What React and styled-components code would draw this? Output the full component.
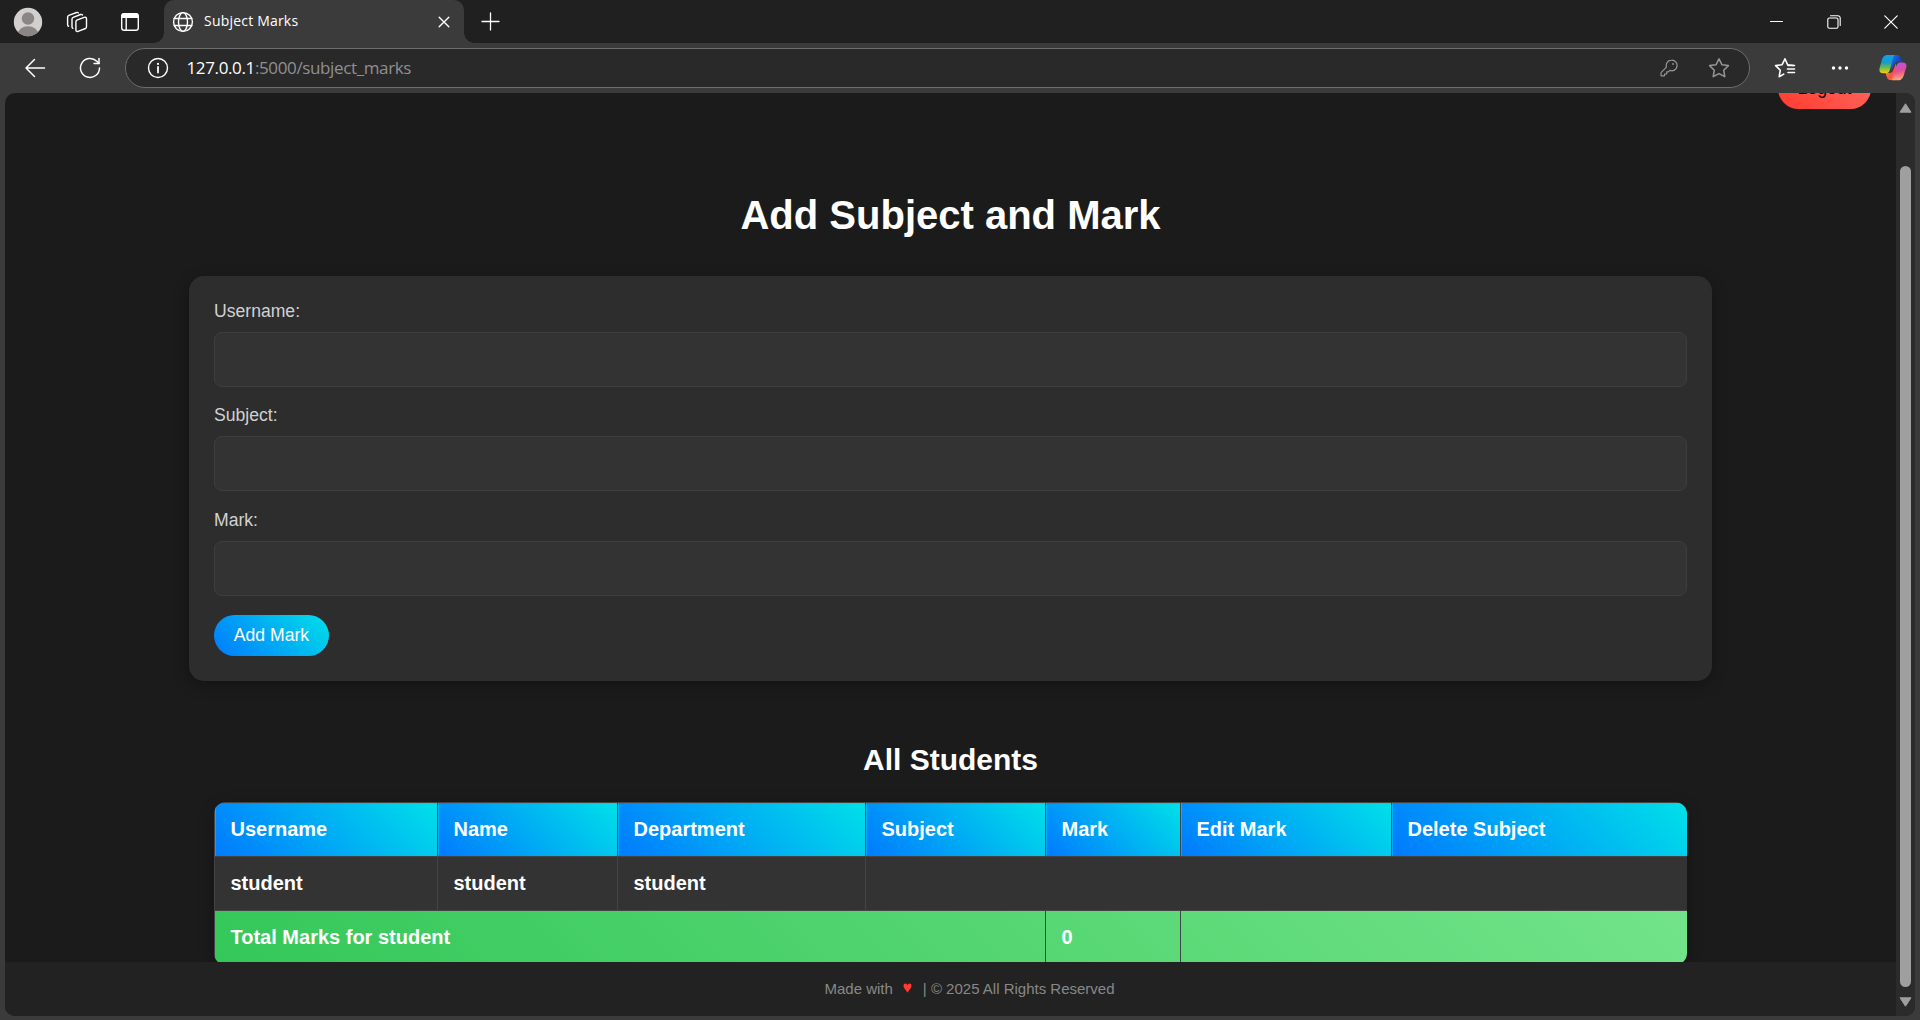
import React from 'react';
import styled, { createGlobalStyle } from 'styled-components';

const GlobalStyle = createGlobalStyle`
  * { box-sizing: border-box; }
  body { margin: 0; background: #3b3b3b; font-family: "Liberation Sans", Arial, sans-serif; overflow: hidden; }
`;

const Browser = styled.div`
  width: 1920px;
  height: 1020px;
  display: flex;
  flex-direction: column;
  background: #3b3b3b;
`;

const uiFont = `"Segoe UI", "Open Sans", "Noto Sans", sans-serif`;

const TabStrip = styled.header`
  display: flex;
  align-items: center;
  height: 43px;
  background: #202020;
  padding-left: 13px;
  font-family: ${uiFont};
  color: #fff;
  svg { display: block; flex: none; }
`;

const Slot = styled.div`
  margin-left: ${(p) => p.$gap || 0}px;
  flex: none;
`;

const Tab = styled.div`
  display: flex;
  align-items: center;
  position: relative;
  width: 300px;
  height: 43px;
  margin-left: 24px;
  padding: 0 14px 0 8px;
  border-radius: 10px 10px 0 0;
  background: #3b3b3b;
  &::before, &::after {
    content: "";
    position: absolute;
    bottom: 0;
    width: 10px;
    height: 10px;
  }
  &::before { left: -10px; background: radial-gradient(circle at 0 0, #202020 9.5px, #3b3b3b 10px); }
  &::after { right: -10px; background: radial-gradient(circle at 100% 0, #202020 9.5px, #3b3b3b 10px); }
`;

const TabTitle = styled.span`
  flex: 1;
  margin-left: 10px;
  padding-bottom: 2px;
  font-size: 14px;
  letter-spacing: 0.2px;
  line-height: 20px;
`;

const WindowControls = styled.div`
  display: flex;
  align-items: center;
  margin-left: auto;
  padding-right: 22px;
  gap: 43.5px;
`;

const Toolbar = styled.nav`
  display: flex;
  align-items: center;
  height: 50px;
  padding-left: 24px;
  color: #fff;
  svg { display: block; flex: none; }
`;

const AddressBar = styled.div`
  display: flex;
  align-items: center;
  width: 1625px;
  height: 40px;
  margin-left: 24px;
  padding: 0 19px 0 21px;
  border: 1px solid #6c6c6c;
  border-radius: 20px;
  background: #292929;
`;

const Url = styled.span`
  flex: 1;
  margin-left: 17.5px;
  font-family: ${uiFont};
  font-size: 17px;
  letter-spacing: -0.37px;
  line-height: 24px;
  color: #909090;
  b { font-weight: 400; color: #fff; }
`;

const Viewport = styled.div`
  display: flex;
  width: 1910px;
  height: 923px;
  margin-left: 5px;
  border-radius: 10px;
  overflow: hidden;
  background: #1b1b1b;
`;

const Page = styled.div`
  flex: 1;
  display: flex;
  flex-direction: column;
`;

const Content = styled.main`
  height: 869px;
  overflow: hidden;
  display: flex;
  flex-direction: column;
  align-items: center;
`;

const TopBar = styled.div`
  align-self: stretch;
  display: flex;
  justify-content: flex-end;
  align-items: flex-end;
  height: 16px;
  padding-right: 25px;
`;

const Pill = styled.button`
  flex: none;
  width: ${(p) => p.$width}px;
  height: 41px;
  padding: 0;
  border: 0;
  border-radius: 25px;
  font: 17.6px "Liberation Sans", Arial, sans-serif;
  color: ${(p) => (p.$danger ? '#000' : '#fff')};
  background: ${(p) => (p.$danger
    ? 'linear-gradient(45deg, #ff3b30, #ff6961)'
    : 'linear-gradient(45deg, #007aff, #00e0e8)')};
`;

const Title = styled.h1`
  margin: 83px 0 0;
  font-size: 40px;
  line-height: 46px;
  color: #fff;
`;

const FormCard = styled.form`
  width: 1523px;
  height: 405px;
  margin-top: 38px;
  padding: 25px;
  border-radius: 15px;
  background: #2d2d2d;
  box-shadow: 0 4px 15px rgba(0, 0, 0, 0.3);
`;

const Field = styled.label`
  display: flex;
  flex-direction: column;
  gap: 11px;
  height: 86px;
  margin-bottom: ${(p) => p.$after}px;
  font-size: 17.6px;
  line-height: 20px;
  color: #d1d1d1;
`;

const Input = styled.input`
  height: 55px;
  padding: 0 16px;
  border: 1px solid #3e3e3e;
  border-radius: 8px;
  background: #333;
  color: #fff;
  outline: none;
`;

const SectionTitle = styled.h2`
  margin: 62px 0 0;
  font-size: 30px;
  line-height: 34px;
  color: #fff;
`;

const TableCard = styled.div`
  flex: none;
  width: 1473px;
  margin-top: 25px;
  border-radius: 12px;
  overflow: hidden;
  box-shadow: 0 4px 15px rgba(0, 0, 0, 0.3);
`;

const Table = styled.table`
  width: 1473px;
  table-layout: fixed;
  border-collapse: collapse;
  background: #333;
  color: #fff;
  font-size: 20px;
  font-weight: 700;
  line-height: 23px;
`;

const Cell = styled.td`
  height: 54px;
  padding: 0 15.5px;
  border: 1px solid #444;
  text-align: left;
`;

const HeadCell = styled(Cell)`
  background: linear-gradient(45deg, #007aff, #00e0e8);
`;

const TotalRow = styled.tr`
  background: linear-gradient(45deg, #34c759, #72e389);
`;

const Footer = styled.footer`
  display: flex;
  align-items: center;
  justify-content: center;
  height: 54px;
  padding: 0 0 2px 38px;
  background: #222;
  color: #888;
  font-size: 15px;
  white-space: pre;
`;

const Heart = styled.span`
  display: flex;
  margin: 0 11px 0 10px;
`;

const Scrollbar = styled.div`
  display: flex;
  flex-direction: column;
  align-items: center;
  width: 19px;
  padding: 10px 0 9px;
  background: #2b2b2b;
  svg { display: block; }
`;

const Thumb = styled.div`
  width: 11px;
  height: 821px;
  margin: 53px 0 10px;
  border-radius: 6px;
  background: #9f9f9f;
`;

const Icon = ({ w, h = w, box, children, sw = 1.3, color = 'currentColor' }) => (
  <svg width={w} height={h} viewBox={box || `0 0 ${w} ${h}`} fill="none" stroke={color}
    strokeWidth={sw} strokeLinecap="round" strokeLinejoin="round">{children}</svg>
);

const Avatar = () => (
  <svg width="30" height="30" viewBox="0 0 30 30">
    <defs><clipPath id="av"><circle cx="15" cy="15" r="14.2" /></clipPath></defs>
    <circle cx="15" cy="15" r="14.2" fill="#d2d0ce" />
    <g clipPath="url(#av)" fill="#8a8683">
      <circle cx="15" cy="11.5" r="6.2" />
      <ellipse cx="15" cy="27.5" rx="10.5" ry="8.3" />
    </g>
  </svg>
);

const Workspaces = () => (
  <Icon w={22} sw={1.4}>
    <path d="M10.8 9.2 18.2 6.3c1.2-.4 2.3.2 2.3 1.5v8c0 .8-.4 1.4-1.1 1.7l-7.3 2.9c-1.2.4-2.2-.2-2.2-1.5v-8c0-.8.3-1.4.9-1.7Z" />
    <path d="M16.5 4c-.4-.6-1.1-.8-1.9-.5L7.2 6.3c-.8.3-1.2.9-1.2 1.7v7.8c0 .8.3 1.3.9 1.5" />
    <path d="M12.3 1.9c-.4-.5-1-.7-1.7-.4L2.8 4.3c-.8.3-1.2.9-1.2 1.7v7.7c0 .8.4 1.4 1 1.5" />
  </Icon>
);

const TabActions = () => (
  <Icon w={20} sw={1.4}>
    <rect x="1.7" y="1.7" width="16.6" height="16.6" rx="2.6" />
    <path d="M1.5 6V4a3 3 0 0 1 3-3h11a3 3 0 0 1 3 3v2Z" fill="currentColor" stroke="none" />
    <path d="M6.2 6v12" />
  </Icon>
);

const Globe = () => (
  <Icon w={22} sw={1.4}>
    <circle cx="11" cy="11" r="9.4" />
    <ellipse cx="11" cy="11" rx="4.5" ry="9.4" />
    <path d="M2.2 7.5h17.6M2.2 14.5h17.6" />
  </Icon>
);

const Refresh = () => (
  <Icon w={22} sw={1.5}>
    <path d="M20.5 11a9.500 9.500 0 1 1-2.700-6.700L20 6.500" />
    <path d="M20 1.5v5h-5" />
  </Icon>
);

const Info = () => (
  <Icon w={22} sw={1.4}>
    <circle cx="11" cy="11" r="9.5" />
    <path d="M11 10v5.5" strokeWidth="1.8" />
    <circle cx="11" cy="6.9" r="1.1" fill="currentColor" stroke="none" />
  </Icon>
);

const Key = () => (
  <Icon w={18} color="#969696" sw={1.2}>
    <path d="M11.5 1.2a5.300 5.300 0 0 0-5 7L1.500 13.200c-.3.300-.5.700-.5 1.100v2c0 .3.300.6.600.6h2.400c.3 0 .6-.3.600-.6v-1.300h1.500c.3 0 .6-.3.600-.6v-1.500h1.500l1.600-1.500a5.300 5.300 0 1 0 1.700-10.200Z" />
    <circle cx="13" cy="5" r=".9" fill="#969696" stroke="none" />
  </Icon>
);

const Star = () => (
  <Icon w={22} color="#969696" sw={1.5}>
    <path d="m11 1.8 2.900 5.900 6.500.9-4.700 4.600 1.100 6.500L11 16.600l-5.800 3.100 1.100-6.500L1.600 8.600l6.500-.9Z" />
  </Icon>
);

const Favorites = () => (
  <Icon w={22} sw={1.6}>
    <path d="M19.500 8.500 13.600 7.700 11 1.800 8.100 7.700l-6.500.9 4.700 4.600-1.100 6.500 4.500-2.600" />
    <path d="M14 8.500h6.500M13.500 12h7M14 15.500h6.500" />
  </Icon>
);

const Copilot = () => (
  <svg width="28" height="28" viewBox="0 0 28 28">
    <defs>
      <linearGradient id="c1" x1="0" y1="0" x2="0" y2="1">
        <stop offset="0" stopColor="#12a0e8" /><stop offset=".4" stopColor="#159bcd" />
        <stop offset=".7" stopColor="#6ebc4b" /><stop offset="1" stopColor="#ffcb0a" />
      </linearGradient>
      <linearGradient id="c2" x1=".3" y1="0" x2=".5" y2="1">
        <stop offset="0" stopColor="#a957f5" /><stop offset=".5" stopColor="#ea4c92" />
        <stop offset="1" stopColor="#ffb070" />
      </linearGradient>
      <linearGradient id="c3" x1="0" y1="0" x2="1" y2="1">
        <stop offset="0" stopColor="#1b78ea" /><stop offset=".6" stopColor="#1440c8" /><stop offset="1" stopColor="#1d80ee" />
      </linearGradient>
      <linearGradient id="c4" x1="0" y1="0" x2="1" y2="1">
        <stop offset="0" stopColor="#ffac2a" /><stop offset=".6" stopColor="#f5533b" /><stop offset="1" stopColor="#ff7a45" />
      </linearGradient>
    </defs>
    <path d="M12 1h6.200c1.700 0 2.600.9 3.200 2.900L22.500 8h-4c-2.300 0-3.300 1.300-4 3.400L12 18Z" fill="url(#c3)" />
    <path d="M17 26h-6c-1.700 0-2.600-.9-3.200-2.900L6.500 19h4c2.300 0 3.300-1.300 4-3.400L17 9Z" fill="url(#c4)" />
    <path d="M16 1H8.500C5 1 3.500 3.500 2.500 7.200 1.300 11.500.4 14 .4 16c0 2.200 1.500 3.200 3.600 3.200h2.800c2.600 0 3.600-1.500 4.300-4l2.300-8.500C14.100 4 14.500 1.500 16 1Z" fill="url(#c1)" />
    <path d="M12.500 26.300h6.700c3.400 0 5-2.700 6-6.400 1.100-4 2.300-6.400 2.300-8.100 0-2.200-1.500-3.400-3.600-3.400h-2.500c-2.600 0-3.600 1.700-4.300 4.200l-2.500 8.500c-.7 2.700-.9 4.700-2.100 5.200Z" fill="url(#c2)" />
  </svg>
);

const widths = [223, 180, 248, 180, 135, 211, 296];
const headings = ['Username', 'Name', 'Department', 'Subject', 'Mark', 'Edit Mark', 'Delete Subject'];

export default function App() {
  return (
    <Browser>
      <GlobalStyle />
      <TabStrip>
        <Avatar />
        <Slot $gap={23}><Workspaces /></Slot>
        <Slot $gap={32}><TabActions /></Slot>
        <Tab>
          <Globe />
          <TabTitle>Subject Marks</TabTitle>
          <Icon w={12} sw={1.4}><path d="m1.200 1.200 9.600 9.600M10.800 1.200 1.200 10.800" /></Icon>
        </Tab>
        <Slot $gap={17}><Icon w={19} sw={1.3}><path d="M9.500 1v17M1 9.500h17" /></Icon></Slot>
        <WindowControls>
          <Icon w={13} sw={1}><path d="M.5 6.500h12" /></Icon>
          <Icon w={14} sw={1.1}><rect x=".8" y="3" width="10.200" height="10.200" rx="1.500" /><path d="M3.500.8h7.500a2.200 2.200 0 0 1 2.200 2.200v7.500" /></Icon>
          <Icon w={14} sw={1.2}><path d="m.8.8 12.400 12.400M13.200.8.800 13.200" /></Icon>
        </WindowControls>
      </TabStrip>
      <Toolbar>
        <Icon w={22} sw={1.5}><path d="M20.500 11H2M10.500 2.500 2 11l8.500 8.500" /></Icon>
        <Slot $gap={33}><Refresh /></Slot>
        <AddressBar>
          <Info />
          <Url><b>127.0.0.1</b>:5000/subject_marks</Url>
          <Key />
          <Slot $gap={30}><Star /></Slot>
        </AddressBar>
        <Slot $gap={24}><Favorites /></Slot>
        <Slot $gap={35}>
          <svg width="18" height="6" fill="#fff"><circle cx="2.500" cy="3" r="1.700" /><circle cx="9" cy="3" r="1.700" /><circle cx="15.500" cy="3" r="1.700" /></svg>
        </Slot>
        <Slot $gap={30}><Copilot /></Slot>
      </Toolbar>
      <Viewport>
        <Page>
          <Content>
            <TopBar><Pill $danger $width={93}>Logout</Pill></TopBar>
            <Title>Add Subject and Mark</Title>
            <FormCard>
              <Field $after={18}>Username:<Input /></Field>
              <Field $after={19}>Subject:<Input /></Field>
              <Field $after={19}>Mark:<Input /></Field>
              <Pill type="button" $width={115}>Add Mark</Pill>
            </FormCard>
            <SectionTitle>All Students</SectionTitle>
            <TableCard>
              <Table>
                <colgroup>{widths.map((w, i) => <col key={i} width={w} />)}</colgroup>
                <thead>
                  <tr>{headings.map((h) => <HeadCell as="th" key={h}>{h}</HeadCell>)}</tr>
                </thead>
                <tbody>
                  <tr>
                    <Cell>student</Cell>
                    <Cell>student</Cell>
                    <Cell>student</Cell>
                    <Cell colSpan={4} />
                  </tr>
                  <TotalRow>
                    <Cell colSpan={4}>Total Marks for student</Cell>
                    <Cell>0</Cell>
                    <Cell colSpan={2} />
                  </TotalRow>
                </tbody>
              </Table>
            </TableCard>
          </Content>
          <Footer>
            Made with
            <Heart><svg width="9" height="10" viewBox="0 0 9 10"><path d="M4.500 9.800C3.700 7.500.5 5.400.5 2.700.5 1.300 1.300.5 2.400.5c1 0 1.800.7 2.100 1.800C4.800 1.200 5.600.5 6.600.5c1.100 0 1.900.8 1.900 2.200 0 2.700-3.200 4.800-4 7.100Z" fill="#ff3b30" /></svg></Heart>
            | © 2025 All Rights Reserved
          </Footer>
        </Page>
        <Scrollbar>
          <svg width="13" height="10"><path d="M6.500.8 12 9.200H1Z" fill="#9f9f9f" stroke="#9f9f9f" strokeLinejoin="round" /></svg>
          <Thumb />
          <svg width="13" height="10"><path d="M6.500 9.200 12 .8H1Z" fill="#9f9f9f" stroke="#9f9f9f" strokeLinejoin="round" /></svg>
        </Scrollbar>
      </Viewport>
    </Browser>
  );
}
